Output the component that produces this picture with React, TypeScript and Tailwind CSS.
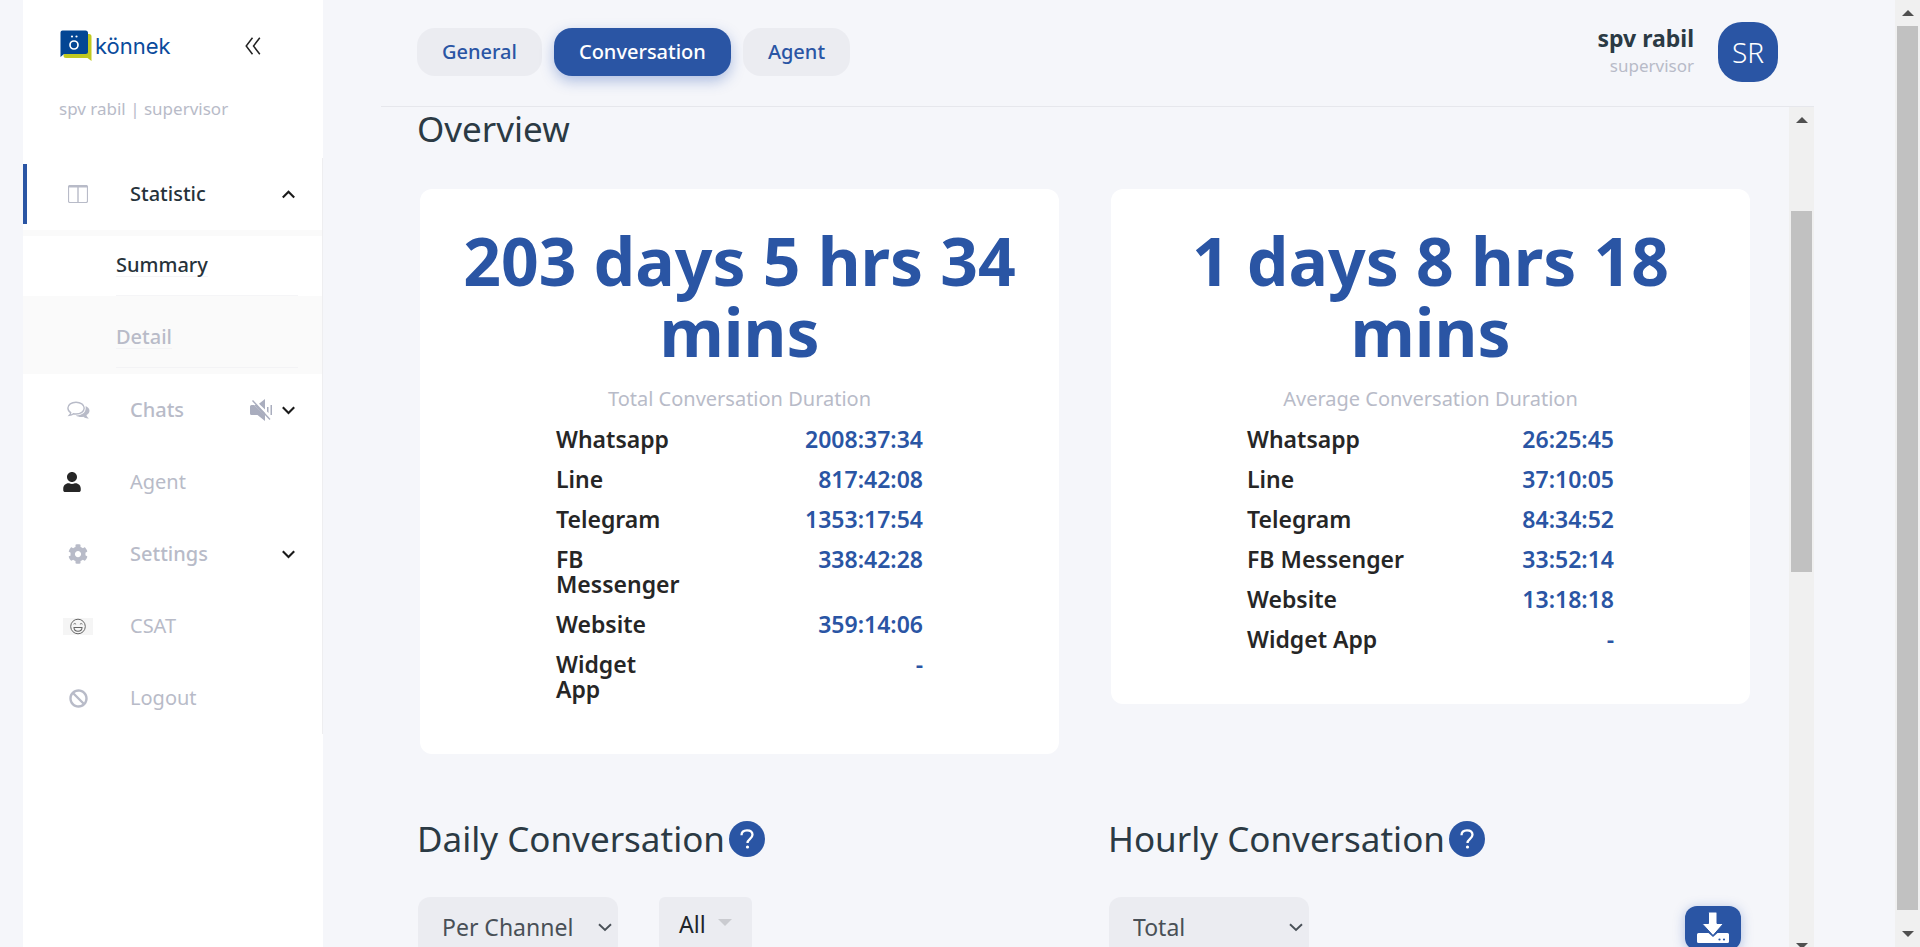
import type { ReactNode } from "react";
import { FaBan, FaCog, FaUser } from "react-icons/fa";

function Logo() {
  return (
    <a href="#home" className="flex items-center gap-[3px] text-[#0a4b9c]">
      <svg width="32" height="32" viewBox="0 0 32 32" aria-hidden="true">
        <path d="M6 4h23a2.500 2.500 0 0 1 2.500 2.500V31l-4-3H6a2.500 2.500 0 0 1-2.500-2.500z" fill="#c1c920" />
        <path d="M2.500 .5h23A2.500 2.500 0 0 1 28 3v18.500a2.500 2.500 0 0 1-2.500 2.500H4L.5 27V2.500a2 2 0 0 1 2-2z" fill="#034694" />
        <circle cx="14" cy="15" r="4" fill="none" stroke="#fff" strokeWidth="1.700" />
        <circle cx="12" cy="6.500" r="1.100" fill="#fff" />
        <circle cx="16.500" cy="6.500" r="1.100" fill="#fff" />
      </svg>
      <span className="font-['Inter',sans-serif] text-[22px] leading-8">könnek</span>
    </a>
  );
}

function ColumnsIcon() {
  return (
    <svg width="20" height="18" viewBox="0 0 20 18" fill="none" stroke="currentColor" aria-hidden="true">
      <rect x=".5" y=".5" width="19" height="17" rx="1.500" strokeWidth="1.200" />
      <path d="M1 1.500h18" strokeWidth="2" />
      <path d="M10 1v16" strokeWidth="1.400" />
    </svg>
  );
}

function CommentsIcon() {
  return (
    <svg width="23" height="19" viewBox="0 0 23 19" aria-hidden="true">
      <path
        d="M9 1.200c4.600 0 8.200 2.500 8.200 5.900S13.600 13 9 13c-.9 0-1.700-.1-2.500-.3-1.300 1-2.700 1.500-4.100 1.600.8-.8 1.200-1.600 1.300-2.600C1.900 10.600.9 9 .9 7.100.9 3.700 4.400 1.200 9 1.200z"
        fill="none"
        stroke="currentColor"
        strokeWidth="1.400"
      />
      <path
        d="M18.600 5c2.300 1 3.900 2.700 3.900 4.800 0 1.800-1.200 3.300-3 4.300.2 1.300.9 2.300 2.300 3.300-2 .3-3.900-.4-5.500-1.600-2.900.5-5.600 0-7.500-1.300 5.700.1 9.900-2.800 9.900-7.200 0-.8 0-1.600-.1-2.300z"
        fill="currentColor"
      />
    </svg>
  );
}

function SmileIcon() {
  return (
    <svg width="30" height="17" viewBox="0 0 30 17" fill="none" stroke="#666" aria-hidden="true">
      <path d="M0 0h30v17H0z" fill="#f5f5f5" stroke="none" />
      <circle cx="15" cy="8.500" r="7.300" strokeWidth="1" />
      <path d="M10.500 6.200q1.300-1.400 2.600 0M16.900 6.200q1.300-1.400 2.600 0" strokeWidth=".9" />
      <path d="M11 9.500h8c0 2.500-1.400 3.700-4 3.700s-4-1.200-4-3.700z" strokeWidth="1.100" />
    </svg>
  );
}

function MutedIcon() {
  return (
    <svg width="22" height="22" viewBox="0 0 22 22" fill="#a9adbe" aria-hidden="true">
      <path d="M15 0v10.500L9 4.800zM1.500 6H4l11 10.800V22l-7.500-6h-6A1.500 1.500 0 0 1 0 14.500v-7A1.500 1.500 0 0 1 1.500 6z" />
      <path d="M4 6h2.500L15 14v3.500z" />
      <path d="M17 8h1.500v6l-1.500-1.500zM20.500 6H22v10h-1.500z" />
      <path d="M2.500 1.500L20 20.500" stroke="#a9adbe" strokeWidth="1.400" />
    </svg>
  );
}

function Chevron({ up = false }: { up?: boolean }) {
  return (
    <svg width="13" height="9" viewBox="0 0 13 9" fill="none" stroke="#1a1a1a" strokeWidth="2.100" aria-hidden="true">
      <path d={up ? "M.8 7.500l5.700-5.700 5.700 5.700" : "M.8 1.300L6.500 7l5.700-5.700"} />
    </svg>
  );
}

function NavItem({
  label,
  icon,
  extra,
  active = false,
  heavy = false,
}: {
  label: string;
  icon: ReactNode;
  extra?: ReactNode;
  active?: boolean;
  heavy?: boolean;
}) {
  return (
    <li className="flex h-[72px] items-center">
      <span className={active ? "h-[60px] w-1 bg-[#2a55a4]" : "h-[60px] w-1"} />
      <a href={`#${label.toLowerCase()}`} className="flex flex-1 items-center pr-[27px] text-[20px] leading-7">
        <span className="mr-[30px] flex w-[73px] justify-center pl-[29px] text-[#b8bbc8]">{icon}</span>
        <span
          className={
            active
              ? "flex-1 font-medium text-[#26323a]"
              : heavy
                ? "flex-1 font-medium text-[#b8bbc8]"
                : "flex-1 text-[#b8bbc8]"
          }
        >
          {label}
        </span>
        <span className="flex items-center gap-2.5">{extra}</span>
      </a>
    </li>
  );
}

function Sidebar() {
  return (
    <aside className="ml-[23px] w-[300px] shrink-0 bg-white">
      <div className="flex items-center justify-between pt-[30px] pr-[62px] pl-[37px]">
        <Logo />
        <button type="button" aria-label="Collapse menu">
          <svg width="16" height="18" viewBox="0 0 16 18" fill="none" stroke="#222" strokeWidth="1.500" aria-hidden="true">
            <path d="M7.500 .8L1.200 9l6.300 8.200M14.800 .8L8.500 9l6.300 8.200" />
          </svg>
        </button>
      </div>
      <p className="mt-[35px] pl-9 text-[17px] leading-6 text-[#b8bbc8]">spv rabil | supervisor</p>
      <nav className="mt-[37px] border-r border-[#eeeef0]">
        <ul>
          <NavItem label="Statistic" icon={<ColumnsIcon />} extra={<Chevron up />} active />
          <li className="bg-[#fafafa] py-1.5 text-[20px] font-medium leading-[22px]">
            <a href="#summary" className="flex h-[60px] items-center bg-white pr-6 pl-[93px] text-[#26323a]">
              <span className="flex h-full flex-1 items-center border-b border-[#f5f5f7]">
                <span className="border-b border-[#f5f5f7]">Summary</span>
              </span>
            </a>
            <a href="#detail" className="flex h-[72px] items-center pr-6 pl-[93px] text-[#b8bbc8]">
              <span className="flex h-full flex-1 items-center border-b border-[#f3f3f5] pt-3">
                <span className="border-b border-[#f3f3f5]">Detail</span>
              </span>
            </a>
          </li>
          <NavItem
            label="Chats"
            heavy
            icon={<CommentsIcon />}
            extra={
              <>
                <MutedIcon />
                <Chevron />
              </>
            }
          />
          <NavItem label="Agent" icon={<FaUser size={20} className="mr-3 text-[#262626]" />} />
          <NavItem label="Settings" heavy icon={<FaCog size={20} />} extra={<Chevron />} />
          <NavItem label="CSAT" icon={<SmileIcon />} />
          <NavItem label="Logout" icon={<FaBan size={19} />} />
        </ul>
      </nav>
    </aside>
  );
}

function TopBar() {
  return (
    <header className="flex h-[107px] shrink-0 items-start justify-between border-b border-[#e6e7ec] pr-9 pl-9">
      <div role="tablist" className="mt-7 flex gap-3 text-[20px] font-medium text-[#2a55a4]">
        <button role="tab" type="button" className="h-12 rounded-[18px] bg-[#ebecf1] px-[25px]">
          General
        </button>
        <button
          role="tab"
          type="button"
          aria-selected="true"
          className="h-12 rounded-[18px] bg-[#2a55a4] px-[25px] text-white shadow-[0_5px_14px_rgba(42,85,180,0.35)]"
        >
          Conversation
        </button>
        <button role="tab" type="button" className="h-12 rounded-[18px] bg-[#ebecf1] px-[25px]">
          Agent
        </button>
      </div>
      <div className="mt-[22px] flex items-center gap-6">
        <div className="text-right">
          <p className="text-[23px] font-bold leading-7 text-[#2b3a44]">spv rabil</p>
          <p className="text-[17px] leading-7 text-[#b8bbc8]">supervisor</p>
        </div>
        <div className="flex size-[60px] items-center justify-center rounded-[24px] bg-[#2a55a4] text-[28px] font-light text-white">
          SR
        </div>
      </div>
    </header>
  );
}

function DurationCard({
  total,
  caption,
  rows,
  narrow = false,
}: {
  total: string;
  caption: string;
  rows: [string, string][];
  narrow?: boolean;
}) {
  return (
    <article className="mx-[3px] rounded-xl bg-white px-9 pt-9 pb-[37px] text-center">
      <h2 className="text-[66px] font-bold leading-[71px] text-[#2a55a4]">{total}</h2>
      <p className="mt-5 text-[20px] leading-6 text-[#b8bbc8]">{caption}</p>
      <div className="mt-4 px-[100px]">
        <table className="w-full table-fixed text-[23px] leading-[25px]">
          <colgroup>
            <col className={narrow ? "w-[127px]" : "w-[200px]"} />
            <col />
          </colgroup>
          <tbody>
            {rows.map(([name, value]) => (
              <tr key={name} className="align-top">
                <th scope="row" className="pb-[15px] text-left font-semibold text-[#262626]">
                  {name}
                </th>
                <td className="pb-[15px] text-right font-semibold text-[#2a55a4]">{value}</td>
              </tr>
            ))}
          </tbody>
        </table>
      </div>
    </article>
  );
}

function SectionTitle({ children }: { children: string }) {
  return (
    <div className="flex items-center gap-1">
      <h2 className="text-[35px] leading-[44px] text-[#2b3a44]">{children}</h2>
      <button
        type="button"
        aria-label={`About ${children}`}
        className="flex size-9 items-center justify-center rounded-full bg-[#2a55a4] text-white"
      >
        <svg width="14" height="20" viewBox="0 0 14 20" fill="none" aria-hidden="true">
          <path
            d="M1.500 6.200C1.500 3.200 3.700 1.300 7 1.300s5.500 1.800 5.500 4.500c0 3.900-5 4.200-5 8.200"
            stroke="currentColor"
            strokeWidth="2.300"
          />
          <circle cx="7.500" cy="18" r="1.600" fill="currentColor" />
        </svg>
      </button>
    </div>
  );
}

function Picker({ label, options }: { label: string; options: string[] }) {
  return (
    <div className="relative ml-px h-[60px] w-[200px]">
      <select
        aria-label={label}
        className="h-full w-full appearance-none rounded-xl bg-[#ebecf1] pl-6 text-[23px] text-[#495057]"
      >
        {options.map((o) => (
          <option key={o}>{o}</option>
        ))}
      </select>
      <svg
        className="pointer-events-none absolute top-[26px] right-1.5"
        width="14"
        height="9"
        viewBox="0 0 14 9"
        fill="none"
        stroke="#495057"
        strokeWidth="1.900"
        aria-hidden="true"
      >
        <path d="M1 1.300l6 5.700 6-5.700" />
      </svg>
    </div>
  );
}

function DownloadIcon() {
  return (
    <svg width="32" height="32" viewBox="0 0 32 32" fill="#fff" aria-hidden="true">
      <path d="M1.500 21h10l4.500 4 4.500-4h10a1.500 1.500 0 0 1 1.500 1.500v7a1.500 1.500 0 0 1-1.500 1.500h-29A1.500 1.500 0 0 1 0 29.500v-7A1.500 1.500 0 0 1 1.500 21z" />
      <path
        d="M12.500 0h6.500a1 1 0 0 1 1 1v10.500h6.500L16 23.500 5 11.500h6.500V1a1 1 0 0 1 1-1z"
        stroke="#2a55a4"
        strokeWidth="1"
      />
      <circle cx="22.500" cy="27.500" r="1.100" fill="#2a55a4" />
      <circle cx="27" cy="27.500" r="1.100" fill="#2a55a4" />
    </svg>
  );
}

function Arrow({ down = false }: { down?: boolean }) {
  return (
    <svg width="12" height="6" viewBox="0 0 12 6" fill="#505050" className="shrink-0" aria-hidden="true">
      <path d={down ? "M0 0h12L6 6z" : "M0 6h12L6 0z"} />
    </svg>
  );
}

const totalRows: [string, string][] = [
  ["Whatsapp", "2008:37:34"],
  ["Line", "817:42:08"],
  ["Telegram", "1353:17:54"],
  ["FB Messenger", "338:42:28"],
  ["Website", "359:14:06"],
  ["Widget App", "-"],
];

const averageRows: [string, string][] = [
  ["Whatsapp", "26:25:45"],
  ["Line", "37:10:05"],
  ["Telegram", "84:34:52"],
  ["FB Messenger", "33:52:14"],
  ["Website", "13:18:18"],
  ["Widget App", "-"],
];

export default function App() {
  return (
    <div className="flex h-screen overflow-hidden bg-[#f5f6fa] font-['Noto_Sans',sans-serif]">
      <Sidebar />
      <div className="mr-[81px] ml-[58px] flex min-w-0 flex-1 flex-col">
        <TopBar />
        <div className="flex min-h-0 flex-1">
          <main className="min-w-0 flex-1 px-9">
            <h1 className="text-[35px] leading-[44px] text-[#2b3a44]">Overview</h1>
            <div className="mt-[38px] grid grid-cols-2 items-start gap-x-[46px]">
              <DurationCard
                total="203 days 5 hrs 34 mins"
                caption="Total Conversation Duration"
                rows={totalRows}
                narrow
              />
              <DurationCard total="1 days 8 hrs 18 mins" caption="Average Conversation Duration" rows={averageRows} />
            </div>
            <div className="mt-[63px] grid grid-cols-2 gap-x-[46px]">
              <section>
                <SectionTitle>Daily Conversation</SectionTitle>
                <div className="mt-9 flex items-start gap-[41px]">
                  <Picker label="Group daily conversation by" options={["Per Channel", "Total"]} />
                  <button
                    type="button"
                    className="flex h-[54px] items-center gap-3 rounded-md bg-[#ebecf1] px-5 text-[23px] text-[#212529]"
                  >
                    All
                    <svg width="14" height="7" viewBox="0 0 14 7" fill="#cacbd0" className="mb-1" aria-hidden="true">
                      <path d="M0 0h14L7 7z" />
                    </svg>
                  </button>
                </div>
              </section>
              <section>
                <SectionTitle>Hourly Conversation</SectionTitle>
                <div className="mt-9 flex items-start justify-between pr-3">
                  <Picker label="Group hourly conversation by" options={["Total", "Per Channel"]} />
                  <button
                    type="button"
                    aria-label="Download"
                    className="mt-[9px] flex h-11 w-14 items-center justify-center rounded-xl bg-[#2a55a4] shadow-[0_2px_12px_rgba(42,85,180,0.35)]"
                  >
                    <DownloadIcon />
                  </button>
                </div>
              </section>
            </div>
          </main>
          <div className="flex w-[25px] shrink-0 flex-col items-center overflow-hidden bg-[#f0f0f0] pt-2.5">
            <Arrow />
            <div className="mt-[88px] h-[361px] w-[21px] shrink-0 bg-[#c1c1c1]" />
            <div className="mt-auto h-1">
              <Arrow down />
            </div>
          </div>
        </div>
      </div>
      <div className="flex w-[25px] shrink-0 flex-col items-center bg-[#f0f0f0] py-2.5">
        <Arrow />
        <div className="mt-2.5 mb-[21px] w-[21px] flex-1 bg-[#c1c1c1]" />
        <Arrow down />
      </div>
    </div>
  );
}
